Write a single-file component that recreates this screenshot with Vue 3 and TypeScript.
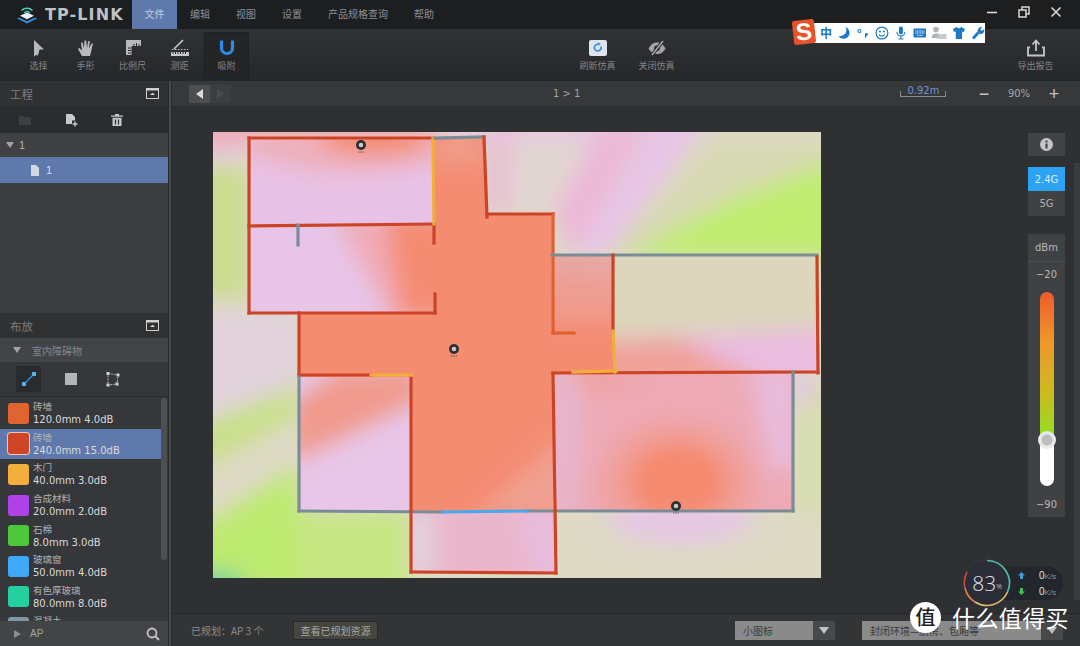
<script setup lang="ts">
interface Layer {
  points?: string
  cx?: number
  cy?: number
  rx?: number
  ry?: number
  color: string
}

interface Room {
  clip: string
  base: string
  layers: Layer[]
}

const menus = ['编辑', '视图', '设置', '产品规格查询', '帮助']

const materials = [
  { name: '砖墙', spec: '120.0mm 4.0dB', color: '#e0642f' },
  { name: '砖墙', spec: '240.0mm 15.0dB', color: '#cf4526', active: true },
  { name: '木门', spec: '40.0mm 3.0dB', color: '#f3af3d' },
  { name: '合成材料', spec: '20.0mm 2.0dB', color: '#b040e8' },
  { name: '石棉', spec: '8.0mm 3.0dB', color: '#4cc83a' },
  { name: '玻璃窗', spec: '50.0mm 4.0dB', color: '#40a8f8' },
  { name: '有色厚玻璃', spec: '80.0mm 8.0dB', color: '#24d0a0' },
  { name: '混凝土', spec: '', color: '#7f98a8' },
]

const rooms: Room[] = [
  {
    clip: '213,132 821,132 821,578 213,578',
    base: '#dedac6',
    layers: [
      { points: '190,110 440,110 440,140 190,140', color: '#f2a6ac' },
      { points: '440,110 700,110 700,138 440,138', color: '#e8c6e6' },
      { points: '190,140 249,140 249,158 190,158', color: '#e6c2dc' },
      { points: '190,168 249,168 249,298 190,298', color: '#cbdc8e' },
      { points: '190,310 299,310 299,385 190,420', color: '#e2d2dc' },
      { points: '190,430 299,385 299,415 190,475', color: '#c8e088' },
      { points: '190,535 299,465 299,600 190,600', color: '#bdea70' },
      { points: '299,511 411,511 411,600 299,600', color: '#c6e684' },
      { points: '190,572 240,572 240,600 190,600', color: '#70d0a0' },
      { points: '487,132 515,132 515,214 487,214', color: '#e8bcd4' },
      { points: '510,140 590,140 555,214 510,214', color: '#e2d6d2' },
      { points: '553,214 572,255 650,125 600,125', color: '#ecb8d6' },
      { points: '572,255 606,255 705,125 655,125', color: '#e8c4e8' },
      { points: '606,255 716,140 840,140 840,255', color: '#d8d9b4' },
      { points: '622,258 730,200 840,158 840,258', color: '#c0ec70' },
      { points: '793,373 840,373 840,511 793,511', color: '#d6ddae' },
      { cx: 680, cy: 518, rx: 72, ry: 26, color: '#e6c8e4' },
      { cx: 804, cy: 385, rx: 12, ry: 24, color: '#e6c8e0' },
    ],
  },
  {
    clip: '249,138 433,138 434,224 249,226',
    base: '#e8c2e6',
    layers: [
      { cx: 352, cy: 142, rx: 110, ry: 30, color: '#eeb0bc' },
      { cx: 375, cy: 138, rx: 55, ry: 16, color: '#f58a6c' },
    ],
  },
  {
    clip: '249,226 434,224 435,313 249,313',
    base: '#e8c4e8',
    layers: [
      { points: '335,215 450,215 450,320 392,320', color: '#f0aab4' },
      { points: '385,215 450,215 450,320 402,320', color: '#f48c72' },
    ],
  },
  {
    clip: '434,138 484,138 487,214 553,214 553,511 411,511 411,377 299,377 299,313 435,313 435,294 420,294 420,243 434,243',
    base: '#f48c72',
    layers: [
      { points: '470,520 570,430 570,520', color: '#f0a092' },
      { points: '434,130 484,130 484,165 434,165', color: '#f09c8a' },
    ],
  },
  {
    clip: '551,255 613,255 615,372 551,373',
    base: '#ee9c90',
    layers: [
      { points: '500,235 680,235 680,285 500,270', color: '#e8a8a4' },
      { points: '480,322 680,322 680,400 480,400', color: '#f48c72' },
    ],
  },
  {
    clip: '613,255 817,255 818,373 615,372',
    base: '#dcd6bc',
    layers: [
      { points: '605,340 830,328 830,385 605,385', color: '#eabce0' },
      { points: '590,342 680,340 770,385 590,385', color: '#f0a098' },
    ],
  },
  {
    clip: '555,373 793,373 793,511 555,511',
    base: '#edaab6',
    layers: [
      { points: '545,365 585,365 575,520 545,520', color: '#e8b6cc' },
      { points: '750,365 800,365 800,470 770,470', color: '#e8bcdc' },
      { cx: 678, cy: 485, rx: 78, ry: 66, color: '#f0a09c' },
      { cx: 678, cy: 482, rx: 50, ry: 40, color: '#f58a6e' },
      { points: '575,368 660,385 575,385', color: '#f09c90' },
    ],
  },
  {
    clip: '299,377 411,377 411,511 299,511',
    base: '#e8c6e8',
    layers: [{ points: '290,405 340,370 420,370 420,400 290,462', color: '#f09a8c' }],
  },
  {
    clip: '411,512 555,512 556,573 411,573',
    base: '#eab6cc',
    layers: [
      { points: '405,512 434,512 434,580 405,580', color: '#e2d4dc' },
      { points: '522,512 560,512 560,580 538,580', color: '#e8bee2' },
    ],
  },
]

const walls = [
  { p: [249, 138, 432, 138], c: '#cc4426' },
  { p: [249, 138, 249, 313], c: '#cc4426' },
  { p: [249, 226, 434, 224], c: '#cc4426' },
  { p: [249, 313, 435, 313], c: '#cc4426' },
  { p: [434, 224, 434, 243], c: '#cc4426' },
  { p: [435, 294, 435, 313], c: '#cc4426' },
  { p: [433, 138, 434, 224], c: '#f2ae38' },
  { p: [435, 138, 484, 137], c: '#7a8c96' },
  { p: [298, 225, 298, 245], c: '#7a8c96' },
  { p: [484, 137, 487, 217], c: '#cc4426' },
  { p: [487, 214, 553, 214], c: '#cc4426' },
  { p: [553, 214, 553, 333], c: '#e0602f' },
  { p: [553, 333, 574, 333], c: '#e0602f' },
  { p: [552, 255, 817, 255], c: '#7a8c96' },
  { p: [613, 255, 613, 331], c: '#cc4426' },
  { p: [817, 257, 818, 373], c: '#cc4426' },
  { p: [553, 373, 818, 372], c: '#cc4426' },
  { p: [793, 372, 793, 511], c: '#7a8c96' },
  { p: [299, 313, 299, 375], c: '#cc4426' },
  { p: [299, 375, 371, 375], c: '#cc4426' },
  { p: [299, 377, 299, 511], c: '#7a8c96' },
  { p: [299, 511, 443, 512], c: '#7a8c96' },
  { p: [527, 511, 793, 511], c: '#7a8c96' },
  { p: [411, 378, 411, 572], c: '#cc4426' },
  { p: [553, 373, 556, 573], c: '#cc4426' },
  { p: [411, 572, 556, 573], c: '#cc4426' },
  { p: [613, 331, 615, 372], c: '#f2ae38' },
  { p: [573, 372, 616, 371], c: '#f2ae38' },
  { p: [371, 375, 412, 375], c: '#f2ae38' },
  { p: [443, 512, 527, 511], c: '#4aa8ec' },
]

const aps = [
  { x: 361, y: 145 },
  { x: 454, y: 349 },
  { x: 676, y: 506 },
]
</script>

<template>
  <div class="app">
    <header class="topbar">
      <div class="brand">
        <svg width="20" height="18" viewBox="0 0 20 18">
          <path d="M4.500 4.500a8 8 0 0 1 11 0" fill="none" stroke="#3fd0b0" stroke-width="1.600" />
          <path d="M7 6.800a4.500 4.500 0 0 1 6 0" fill="none" stroke="#3fd0b0" stroke-width="1.500" />
          <path d="M10 6.500l7 3.300-7 3.400-7-3.400z" fill="#e8f2f8" />
          <path d="M2 11.500l8 3.700 8-3.700 2 1-10 5-10-5z" fill="#2a8ee0" />
        </svg>
        <span class="brand__name">TP-LINK</span>
      </div>
      <nav class="menu">
        <span class="menu__item menu__item--active">文件</span>
        <span v-for="m in menus" :key="m" class="menu__item">{{ m }}</span>
      </nav>
      <div class="win-btns">
        <svg width="14" height="14" viewBox="0 0 14 14"><path d="M2 7.500h10" stroke="#d8d8d8" stroke-width="1.600" /></svg>
        <svg width="14" height="14" viewBox="0 0 14 14" fill="none" stroke="#d8d8d8" stroke-width="1.500"><rect x="2" y="5" width="7" height="7" /><path d="M5 5V2h7v7H9" /></svg>
        <svg width="14" height="14" viewBox="0 0 14 14"><path d="M2.500 2.500l9 9M11.500 2.500l-9 9" stroke="#d8d8d8" stroke-width="1.600" /></svg>
      </div>
    </header>

    <div class="toolbar">
      <div class="tool">
        <svg width="20" height="20" viewBox="0 0 20 20"><path d="M5 2l10 9.500h-4.500l-1.500 6-2-.5-2 1.500z" fill="#b8b9bb" /></svg>
        <span>选择</span>
      </div>
      <div class="tool">
        <svg width="20" height="20" viewBox="0 0 20 20"><path d="M6 18l-4-7 1.500-1 2.500 2.500L5 4.500h1.600L8 10 8.500 2.500h1.700L11 10l1.200-7h1.600L13 10.500l2.600-5h1.400L15 14l-1 4z" fill="#b8b9bb" /></svg>
        <span>手形</span>
      </div>
      <div class="tool">
        <svg width="20" height="20" viewBox="0 0 20 20"><path d="M3 2h15v6h-1.500V6h-1v2h-1.500V5h-1v3h-1.500V6h-1v2H8.500v9H3z" fill="#b8b9bb" /><path d="M5 10h3M5 12.500h3M5 15h3" stroke="#2a2b2d" stroke-width="1" /></svg>
        <span>比例尺</span>
      </div>
      <div class="tool">
        <svg width="20" height="20" viewBox="0 0 20 20"><path d="M4 11l9-9" stroke="#c8c9cb" stroke-width="1.600" /><path d="M2 11.500h16" stroke="#c8c9cb" stroke-width="1" stroke-dasharray="1.500 1.500" /><path d="M1 14h18v4H1z" fill="#c8c9cb" /><path d="M3 14v2M5.500 14v2M8 14v2M10.500 14v2M13 14v2M15.500 14v2" stroke="#2a2b2d" stroke-width="1" /></svg>
        <span>测距</span>
      </div>
      <div class="tool tool--active">
        <svg width="20" height="20" viewBox="0 0 20 20"><path d="M4.500 2.500V10a5.500 5.500 0 0 0 11 0V2.500" fill="none" stroke="#2c8ce8" stroke-width="3.200" /></svg>
        <span>吸附</span>
      </div>
      <div class="tool tool--wide tool--first">
        <svg width="20" height="20" viewBox="0 0 20 20">
          <rect x="1" y="2" width="18" height="16" rx="2" fill="#dfe4ee" />
          <path d="M13 8.500a3.400 3.400 0 1 1-1.700-2" fill="none" stroke="#3f90e0" stroke-width="1.700" />
          <path d="M10 4.200l2.800 1.900-2.600 1.500z" fill="#3f90e0" />
        </svg>
        <span>刷新仿真</span>
      </div>
      <div class="tool tool--wide">
        <svg width="20" height="20" viewBox="0 0 20 20"><path d="M1.500 10.500C4 6 7 4.500 10 4.500s6 1.500 8.500 6C16 15 13 16 10 16s-6-1-8.500-5.500z" fill="#a4a5a7" /><circle cx="10" cy="10.300" r="2.800" fill="#2a2b2d" /><path d="M5 17L16 3" stroke="#2a2b2d" stroke-width="3.600" /><path d="M5 17L16 3" stroke="#a4a5a7" stroke-width="1.600" /></svg>
        <span>关闭仿真</span>
      </div>
      <div class="tool tool--wide tool--export">
        <svg width="20" height="20" viewBox="0 0 20 20"><path d="M4 8.500H2v8h16v-8h-2" fill="none" stroke="#c4c5c7" stroke-width="1.800" transform="translate(0 1)" /><path d="M10 13V4M6.500 6.500L10 2.500l3.500 4" fill="none" stroke="#c4c5c7" stroke-width="1.800" /></svg>
        <span>导出报告</span>
      </div>
    </div>

    <div class="workspace">
      <aside class="sidebar">
        <div class="panel-head">
          <span>工程</span>
          <svg class="collapse" width="13" height="11" viewBox="0 0 13 11"><rect x="0.500" y="0.500" width="12" height="10" fill="none" stroke="#d0d0d0" /><path d="M0 0h13v2.500H0z" fill="#d0d0d0" /><path d="M6.500 4.500L9 7H4z" fill="#d0d0d0" /></svg>
        </div>
        <div class="project-tools">
          <svg width="14" height="14" viewBox="0 0 14 14"><path d="M1 3h4l1 1.500h7V12H1z" fill="#3f4042" /></svg>
          <svg width="14" height="14" viewBox="0 0 14 14"><path d="M2 1h6l3 3v3.500H8V11H2z" fill="#c8c9cb" /><path d="M11 8.500v5M8.500 11h5" stroke="#c8c9cb" stroke-width="1.400" /></svg>
          <svg width="14" height="14" viewBox="0 0 14 14"><path d="M1 2.500h12v1.300H1zM5 1h4v1.500H5z" fill="#c8c9cb" /><path d="M2.500 4.800h9V13h-9z" fill="#c8c9cb" /><path d="M5.500 6.500v5M8.500 6.500v5" stroke="#2b2c2e" stroke-width="1.200" /></svg>
        </div>
        <div class="tree-row">
          <i class="tri tri--down" />
          <span>1</span>
        </div>
        <div class="tree-row tree-row--child">
          <svg width="10" height="11" viewBox="0 0 10 11"><path d="M1 0h5l3 3v8H1z" fill="#d4d8e2" /></svg>
          <span>1</span>
        </div>
        <div class="tree-empty" />

        <div class="panel-head">
          <span>布放</span>
          <svg class="collapse" width="13" height="11" viewBox="0 0 13 11"><rect x="0.500" y="0.500" width="12" height="10" fill="none" stroke="#d0d0d0" /><path d="M0 0h13v2.500H0z" fill="#d0d0d0" /><path d="M6.500 4.500L9 7H4z" fill="#d0d0d0" /></svg>
        </div>
        <div class="section-head">
          <i class="tri tri--down" />
          <span>室内障碍物</span>
        </div>
        <div class="shape-tools">
          <div class="shape-tool shape-tool--active">
            <svg width="16" height="16" viewBox="0 0 16 16"><path d="M2.500 13.500l11-11" stroke="#2c8ce8" stroke-width="1.500" /><rect x="1" y="11" width="4" height="4" fill="#58aef0" /><rect x="11" y="1" width="4" height="4" fill="#58aef0" /></svg>
          </div>
          <div class="shape-tool">
            <svg width="14" height="14" viewBox="0 0 14 14"><rect x="1" y="1" width="12" height="12" fill="#b4b5b7" /></svg>
          </div>
          <div class="shape-tool">
            <svg width="16" height="16" viewBox="0 0 16 16"><path d="M3 2.500l10 1.500-1 9-9 1z" fill="none" stroke="#b4b5b7" stroke-width="1" stroke-dasharray="2 1" /><g fill="#d0d1d3"><rect x="1.500" y="1" width="3" height="3" /><rect x="11.500" y="2.500" width="3" height="3" /><rect x="10.500" y="11.500" width="3" height="3" /><rect x="1.500" y="12.500" width="3" height="3" /></g></svg>
          </div>
        </div>
        <div class="materials">
          <div
            v-for="(m, i) in materials"
            :key="i"
            class="material"
            :class="{ 'material--active': m.active, 'material--cut': !m.spec }"
          >
            <span class="swatch" :style="{ background: m.color }" />
            <span class="material__text">
              <span class="material__name">{{ m.name }}</span>
              <span v-if="m.spec" class="material__spec">{{ m.spec }}</span>
            </span>
          </div>
          <div class="materials__scroll" />
        </div>
        <div class="ap-bar">
          <i class="tri tri--right" />
          <span>AP</span>
          <svg width="14" height="14" viewBox="0 0 14 14" fill="none" stroke="#c4c5c7" stroke-width="1.800"><circle cx="6" cy="6" r="4.500" /><path d="M9.500 9.500L13 13" /></svg>
        </div>
      </aside>
      <div class="splitter" />

      <main class="main">
        <div class="pathbar">
          <div class="nav-btns">
            <span class="nav-btn nav-btn--on"><i class="arrow arrow--left" /></span>
            <span class="nav-btn"><i class="arrow arrow--right" /></span>
          </div>
          <span class="crumb">1 &gt; 1</span>
          <div class="scale">0.92m</div>
          <div class="zoom">
            <span class="zoom__btn">−</span>
            <span class="zoom__val">90%</span>
            <span class="zoom__btn">+</span>
          </div>
        </div>

        <div class="canvas">
          <svg class="heatmap" width="608" height="446" viewBox="213 132 608 446">
            <defs>
              <filter id="soft" filterUnits="userSpaceOnUse" x="150" y="80" width="740" height="560">
                <feGaussianBlur stdDeviation="11" />
              </filter>
              <clipPath v-for="(r, i) in rooms" :id="`room${i}`" :key="i">
                <polygon :points="r.clip" />
              </clipPath>
            </defs>
            <g v-for="(r, i) in rooms" :key="i" :clip-path="`url(#room${i})`">
              <polygon :points="r.clip" :fill="r.base" />
              <g filter="url(#soft)">
                <template v-for="(l, j) in r.layers" :key="j">
                  <polygon v-if="l.points" :points="l.points" :fill="l.color" />
                  <ellipse v-else :cx="l.cx" :cy="l.cy" :rx="l.rx" :ry="l.ry" :fill="l.color" />
                </template>
              </g>
            </g>
            <line
              v-for="(w, i) in walls"
              :key="i"
              :x1="w.p[0]"
              :y1="w.p[1]"
              :x2="w.p[2]"
              :y2="w.p[3]"
              :stroke="w.c"
              stroke-width="3.200"
              stroke-linecap="square"
            />
            <g v-for="a in aps" :key="a.x">
              <circle :cx="a.x" :cy="a.y" r="5" fill="#2e2f31" />
              <circle :cx="a.x" :cy="a.y" r="2.300" fill="#c8cacc" />
              <path :d="`M${a.x - 3} ${a.y + 7}h6`" stroke="#555" stroke-width="1" stroke-dasharray="1.500 1" />
            </g>
          </svg>

          <div class="side-controls">
            <div class="info-btn">
              <svg width="13" height="13" viewBox="0 0 13 13"><circle cx="6.500" cy="6.500" r="6.500" fill="#c4c5c7" /><path d="M5.500 5.500h2V10.500h-2zM5.500 2.500h2v2h-2z" fill="#3f4042" /></svg>
            </div>
            <div class="band">
              <span class="band__item band__item--on">2.4G</span>
              <span class="band__item">5G</span>
            </div>
            <div class="legend">
              <span class="legend__unit">dBm</span>
              <span class="legend__max">−20</span>
              <div class="legend__bar"><span class="legend__thumb" /></div>
              <span class="legend__min">−90</span>
            </div>
          </div>
          <div class="scroll-strip" />
        </div>

        <footer class="footer">
          <span class="footer__count">已规划：AP 3 个</span>
          <button class="footer__btn" type="button">查看已规划资源</button>
          <div class="select select--small">
            <span class="select__text">小图标</span>
            <span class="select__arrow"><i class="tri tri--down tri--light" /></span>
          </div>
          <div class="select select--env">
            <span class="select__text">封闭环境—厨房、包厢等</span>
            <span class="select__arrow"><i class="tri tri--down tri--light" /></span>
          </div>
        </footer>
      </main>
    </div>

    <!-- 输入法状态条，盖在工具栏上面 -->
    <div class="ime">
      <span class="ime__logo">S</span>
      <span class="ime__zh">中</span>
      <svg width="14" height="14" viewBox="0 0 14 14"><path d="M8.500 1C11 5 9 10 1.500 10.500 4.500 14 11 13.500 12.500 8.500 13.300 5.500 11.500 2 8.500 1z" fill="#1e78c8" /></svg>
      <svg width="14" height="14" viewBox="0 0 14 14"><circle cx="3.500" cy="5" r="1.500" fill="none" stroke="#1e78c8" stroke-width="1.100" /><path d="M9 8.500a1.500 1.500 0 1 1 1.500 1.500c0 1-.7 1.800-1.500 2.200" fill="#1e78c8" /></svg>
      <svg width="14" height="14" viewBox="0 0 14 14" fill="none" stroke="#1e78c8" stroke-width="1.200"><circle cx="7" cy="7" r="6" /><circle cx="5" cy="5.500" r=".5" /><circle cx="9" cy="5.500" r=".5" /><path d="M4 8.500a3.500 3.500 0 0 0 6 0" /></svg>
      <svg width="14" height="14" viewBox="0 0 14 14"><rect x="5" y="0.500" width="4" height="8" rx="2" fill="#1e78c8" /><path d="M3 6a4 4 0 0 0 8 0M7 10v3M4.500 13h5" fill="none" stroke="#1e78c8" stroke-width="1.100" /></svg>
      <svg width="14" height="14" viewBox="0 0 14 14"><rect x="0.500" y="2.500" width="13" height="9" rx="1" fill="#1e78c8" /><path d="M2.500 5h9M2.500 7h9M4 9.300h6" stroke="#fff" stroke-width="1" stroke-dasharray="1 .6" /></svg>
      <svg width="16" height="14" viewBox="0 0 16 14"><circle cx="5" cy="3.500" r="2.800" fill="#aeb6bc" /><path d="M0.500 12c0-3 2-4.500 4.500-4.500H8V12z" fill="#aeb6bc" /><rect x="7" y="8" width="8.500" height="5" fill="#c4cace" /></svg>
      <svg width="14" height="14" viewBox="0 0 14 14"><path d="M4.500 1L1 3l1 3 1.800-.5V13h6.400V5.500L12 6l1-3-3.500-2-2.500 1.500z" fill="#1e78c8" /></svg>
      <svg width="14" height="14" viewBox="0 0 14 14"><path d="M2 12.500L7.500 6.500" stroke="#1e78c8" stroke-width="2.800" /><path d="M11.500 1.200a3.800 3.800 0 0 0-4.800 4.600l1.800 2a3.800 3.800 0 0 0 4.800-4.800l-2.200 2-1.800-1.800z" fill="#1e78c8" /></svg>
    </div>

    <div class="net-widget">
      <div class="net-widget__ring">
        <svg width="48" height="48" viewBox="0 0 48 48" fill="none" stroke-width="1.600">
          <circle cx="24" cy="24" r="23" fill="#2a2c36" stroke="#32343e" />
          <path d="M24 1.500A22.500 22.500 0 0 1 44.500 33" stroke="#4ec0a8" />
          <path d="M44.500 33A22.500 22.500 0 0 1 12 43" stroke="#dcc060" />
          <path d="M12 43A22.500 22.500 0 0 1 2 29" stroke="#e08050" />
          <path d="M2 29A22.500 22.500 0 0 1 4 13" stroke="#c84848" />
        </svg>
        <span class="net-widget__pct">83<small>%</small></span>
      </div>
      <div class="net-widget__rates">
        <span><svg width="7" height="7" viewBox="0 0 7 7"><path d="M3.500 0L7 3.500H5V7H2V3.500H0z" fill="#3c9ce0" /></svg><b>0<small>K/s</small></b></span>
        <span><svg width="7" height="7" viewBox="0 0 7 7"><path d="M3.500 7L0 3.500h2V0h3v3.500h2z" fill="#38c048" /></svg><b>0<small>K/s</small></b></span>
      </div>
    </div>

    <div class="watermark">
      <span class="watermark__badge">值</span>
      <span class="watermark__text">什么值得买</span>
    </div>
  </div>
</template>

<style scoped>
.app {
  position: relative;
  display: flex;
  flex-direction: column;
  width: 1080px;
  height: 646px;
  overflow: hidden;
  background: #2f3032;
  color: #a8a9ab;
  font-family: "Noto Sans CJK SC", "Liberation Sans", sans-serif;
  font-size: 10px;
}

.topbar {
  display: flex;
  align-items: stretch;
  height: 29px;
  background: #1d1e20;
}

.brand {
  display: flex;
  align-items: center;
  gap: 8px;
  width: 132px;
  padding-left: 17px;
  box-sizing: border-box;
}

.brand__name {
  font-family: "DejaVu Sans", sans-serif;
  font-size: 16px;
  font-weight: 700;
  letter-spacing: 1.1px;
  color: #bcc2c6;
  white-space: nowrap;
}

.menu {
  display: flex;
}

.menu__item {
  display: flex;
  align-items: center;
  padding: 0 12px 2px;
  color: #8e8f91;
  font-size: 10px;
  margin-right: 2px;
}

.menu__item--active {
  width: 45px;
  padding: 0 0 2px;
  margin-right: 1px;
  justify-content: center;
  background: #6079ac;
  color: #c2cde2;
}

.win-btns {
  display: flex;
  align-items: center;
  gap: 18px;
  margin-left: auto;
  padding: 0 17px 5px 0;
}

.toolbar {
  display: flex;
  height: 52px;
  padding-left: 15px;
  background: linear-gradient(#313234, #26272a);
}

.tool {
  display: flex;
  flex-direction: column;
  align-items: center;
  width: 47px;
  padding-top: 9px;
  box-sizing: border-box;
  font-size: 9px;
  color: #85868a;
}

.tool svg {
  flex: none;
  margin-bottom: 1px;
}

.tool span {
  line-height: 14px;
  white-space: nowrap;
}

.tool--active {
  width: 43px;
  margin: 4px 2px 0;
  padding-top: 5px;
  background: #242527;
  box-shadow: 0 0 0 1px #202123;
}

.tool--wide {
  width: 59px;
}

.tool--first {
  margin-left: 318px;
}

.tool--export {
  margin-left: auto;
  margin-right: 15px;
}

.workspace {
  flex: 1;
  display: flex;
  min-height: 0;
}

.sidebar {
  display: flex;
  flex-direction: column;
  width: 168px;
  background: #36373a;
}

.splitter {
  width: 4px;
  background: linear-gradient(90deg, #252628 0 25%, #4c4d4f 25% 75%, #252628 75%);
}

.panel-head {
  display: flex;
  align-items: center;
  justify-content: space-between;
  height: 25px;
  padding: 0 9px 0 10px;
  background: #303133;
  font-size: 11.5px;
  color: #7d7e80;
}

.project-tools {
  display: flex;
  align-items: center;
  gap: 32px;
  height: 27px;
  padding-left: 18px;
  background: #2b2c2e;
}

.tree-row {
  display: flex;
  align-items: center;
  gap: 5px;
  height: 24px;
  padding-left: 6px;
  background: #404143;
  font-family: "Liberation Sans", sans-serif;
  font-size: 11px;
  color: #b4b5b7;
}

.tree-row--child {
  height: 26px;
  gap: 6px;
  padding-left: 30px;
  background: #6079ac;
  color: #d4dcec;
}

.tree-empty {
  height: 130px;
  background: #3b3c3e;
}

.tri {
  display: inline-block;
  width: 0;
  height: 0;
  border-style: solid;
}

.tri--down {
  border-width: 6px 4px 0;
  border-color: #a4a5a7 transparent transparent;
}

.tri--right {
  border-width: 4px 0 4px 7px;
  border-color: transparent transparent transparent #8c8d8f;
}

.tri--light {
  border-width: 7px 5px 0;
  border-color: #c0c1c3 transparent transparent;
}

.section-head {
  display: flex;
  align-items: center;
  gap: 11px;
  height: 24px;
  padding-left: 13px;
  background: #434446;
  color: #85868a;
}

.shape-tools {
  display: flex;
  align-items: center;
  gap: 17px;
  height: 35px;
  padding-left: 16px;
  border-bottom: 1px solid #2c2d2f;
  box-sizing: border-box;
}

.shape-tool {
  display: flex;
  align-items: center;
  justify-content: center;
  width: 25px;
  height: 26px;
}

.shape-tool--active {
  background: #2a2b2e;
}

.materials {
  position: relative;
  height: 224px;
  padding-top: 1px;
  box-sizing: border-box;
  overflow: hidden;
}

.material {
  display: flex;
  align-items: center;
  gap: 4px;
  width: 161px;
  height: 30.6px;
  padding-left: 8px;
  box-sizing: border-box;
}

.material--cut .material__text {
  align-self: flex-start;
  padding-top: 2px;
}

.material--active {
  background: #6079ac;
}

.material--active .swatch {
  box-shadow: 0 0 0 1px #eec8b8;
}

.swatch {
  flex: none;
  width: 21px;
  height: 21px;
  border-radius: 3px;
}

.material__text {
  display: flex;
  flex-direction: column;
  line-height: 13px;
}

.material__name {
  font-size: 9.5px;
  color: #b0b1b3;
}

.material__spec {
  font-family: "DejaVu Sans", sans-serif;
  font-size: 10px;
  color: #d8d9db;
  white-space: nowrap;
}

.materials__scroll {
  position: absolute;
  top: 1px;
  right: 1px;
  width: 6px;
  height: 162px;
  border-radius: 3px;
  background: #4e4f52;
}

.ap-bar {
  display: flex;
  align-items: center;
  gap: 9px;
  flex: 1;
  padding: 0 8px 0 14px;
  background: #434446;
  color: #a4a5a7;
  font-family: "Liberation Sans", sans-serif;
}

.ap-bar svg {
  margin-left: auto;
}

.collapse {
  flex: none;
}

.main {
  flex: 1;
  display: flex;
  flex-direction: column;
  min-width: 0;
}

.pathbar {
  position: relative;
  display: flex;
  align-items: center;
  height: 26px;
  padding-left: 17px;
  background: #37383a;
  border-bottom: 1px solid #2a2b2d;
  box-sizing: border-box;
  font-family: "DejaVu Sans", sans-serif;
  font-size: 10px;
  color: #a4a5a7;
}

.nav-btns {
  display: flex;
}

.nav-btn {
  display: flex;
  align-items: center;
  justify-content: center;
  width: 21px;
  height: 18px;
  background: #3d3e40;
}

.nav-btn--on {
  background: #4d4e50;
}

.arrow {
  width: 0;
  height: 0;
  border-style: solid;
  border-width: 5px 0;
  border-color: transparent;
}

.arrow--left {
  border-right: 7px solid #dcdcdc;
}

.arrow--right {
  border-left: 7px solid #4a4b4d;
}

.crumb {
  margin-left: 322px;
}

.scale {
  position: relative;
  top: 0;
  width: 44px;
  height: 5px;
  margin-left: 320px;
  border: 1px solid #8a8c90;
  border-top: 0;
  color: #6f93d8;
  line-height: 0;
  text-align: center;
}

.zoom {
  display: flex;
  align-items: center;
  margin-left: auto;
  padding-right: 18px;
}

.zoom__btn {
  width: 16px;
  text-align: center;
  font-family: "Liberation Sans", sans-serif;
  font-size: 18px;
  line-height: 18px;
  color: #c0c1c3;
}

.zoom__val {
  width: 54px;
  text-align: center;
  color: #a8a9ab;
}

.canvas {
  position: relative;
  flex: 1;
  padding: 25px 0 0 41px;
  background: #2f3032;
}

.heatmap {
  display: block;
}

.side-controls {
  position: absolute;
  top: 26px;
  right: 15px;
  display: flex;
  flex-direction: column;
  width: 37px;
}

.info-btn {
  display: flex;
  align-items: center;
  justify-content: center;
  height: 23px;
  background: #424345;
}

.band {
  display: flex;
  flex-direction: column;
  margin-top: 11px;
  font-family: "DejaVu Sans", sans-serif;
  font-size: 10px;
}

.band__item {
  display: flex;
  align-items: center;
  justify-content: center;
  height: 25px;
  background: #404143;
  color: #b0b1b3;
}

.band__item--on {
  height: 24px;
  background: #2ea2f2;
  color: #d8eefc;
}

.legend {
  position: relative;
  display: flex;
  flex-direction: column;
  align-items: center;
  height: 283px;
  margin-top: 18px;
  background: #404143;
  font-family: "DejaVu Sans", sans-serif;
  font-size: 10px;
  color: #b8b9bb;
}

.legend__unit {
  width: 100%;
  height: 27px;
  line-height: 27px;
  text-align: center;
  border-bottom: 1px solid #4e4f51;
}

.legend__max {
  margin-top: 6px;
  line-height: 14px;
}

.legend__bar {
  position: relative;
  width: 14px;
  height: 194px;
  margin-top: 10px;
  border-radius: 7px;
  background: linear-gradient(#ef5a2e 0, #f0962a 25%, #d0b820 50%, #8fe020 76%, #fff 77%);
}

.legend__thumb {
  position: absolute;
  top: 139px;
  left: -2px;
  width: 18px;
  height: 18px;
  border-radius: 50%;
  background: radial-gradient(circle, #bcbdbf 0 5px, #e8e8ea 6px);
}

.legend__min {
  margin-top: 12px;
  line-height: 14px;
}

.scroll-strip {
  position: absolute;
  top: 56px;
  right: 0;
  width: 6px;
  bottom: 13px;
  background: #3b3c3e;
}

.footer {
  display: flex;
  align-items: center;
  height: 33px;
  padding-left: 19px;
  background: #333436;
  border-top: 1px solid #26272a;
  box-sizing: border-box;
  color: #8c8d8f;
}

.footer__count {
  width: 102px;
  white-space: nowrap;
}

.footer__btn {
  width: 85px;
  height: 19px;
  padding: 0;
  border: 1px solid #2a2b2d;
  background: #45463f;
  color: #a8a9a4;
  font: inherit;
}

.select {
  display: flex;
  height: 19px;
  align-items: stretch;
  background: #8a8a8b;
  color: #3a3a3b;
}

.select--small {
  width: 100px;
  margin-left: 357px;
}

.select--env {
  width: 201px;
  margin-left: 27px;
}

.select__text {
  flex: 1;
  padding-left: 8px;
  line-height: 19px;
  white-space: nowrap;
  overflow: hidden;
}

.select__arrow {
  display: flex;
  align-items: center;
  justify-content: center;
  width: 22px;
  background: #48494b;
}

.ime {
  position: absolute;
  top: 23px;
  left: 806px;
  display: flex;
  align-items: center;
  gap: 5px;
  width: 179px;
  height: 20px;
  padding-left: 14px;
  box-sizing: border-box;
  background: #fff;
}

.ime__logo {
  position: absolute;
  top: -3px;
  left: -13px;
  width: 22px;
  height: 24px;
  background: #e8542a;
  border-radius: 2px;
  transform: rotate(-6deg);
  color: #fff;
  font-family: "Liberation Sans", sans-serif;
  font-size: 24px;
  font-weight: 700;
  line-height: 24px;
  text-align: center;
}

.ime__zh {
  color: #1e78c8;
  font-size: 12px;
  font-weight: 700;
  line-height: 14px;
}

.net-widget {
  position: absolute;
  top: 559px;
  left: 963px;
  display: flex;
  align-items: center;
}

.net-widget__ring {
  position: relative;
  z-index: 1;
  width: 48px;
  height: 48px;
}

.net-widget__ring svg {
  display: block;
}

.net-widget__pct {
  position: absolute;
  inset: 0;
  display: flex;
  align-items: center;
  justify-content: center;
  font-family: "Open Sans", sans-serif;
  font-size: 21px;
  font-weight: 300;
  color: #e0e2e8;
}

.net-widget__pct small {
  font-size: 7px;
  margin-top: 7px;
}

.net-widget__rates {
  display: flex;
  flex-direction: column;
  gap: 4px;
  width: 64px;
  height: 34px;
  margin-left: -12px;
  padding: 3px 7px 0 19px;
  box-sizing: border-box;
  border-radius: 0 17px 17px 0;
  background: #24262e;
}

.net-widget__rates span {
  display: flex;
  align-items: center;
  justify-content: space-between;
  height: 12px;
}

.net-widget__rates b {
  font-family: "Liberation Sans", sans-serif;
  font-size: 10px;
  font-weight: 400;
  color: #e0e2e8;
}

.net-widget__rates small {
  font-size: 8px;
  color: #8c8e96;
}

.watermark {
  position: absolute;
  top: 602px;
  left: 910px;
  display: flex;
  align-items: center;
  gap: 11px;
}

.watermark__badge {
  width: 31px;
  height: 31px;
  border-radius: 50%;
  background: #fff;
  color: #222;
  font-size: 20px;
  font-weight: 500;
  line-height: 30px;
  text-align: center;
}

.watermark__text {
  color: #fff;
  font-size: 23px;
  line-height: 31px;
  white-space: nowrap;
  letter-spacing: 0.4px;
}
</style>
